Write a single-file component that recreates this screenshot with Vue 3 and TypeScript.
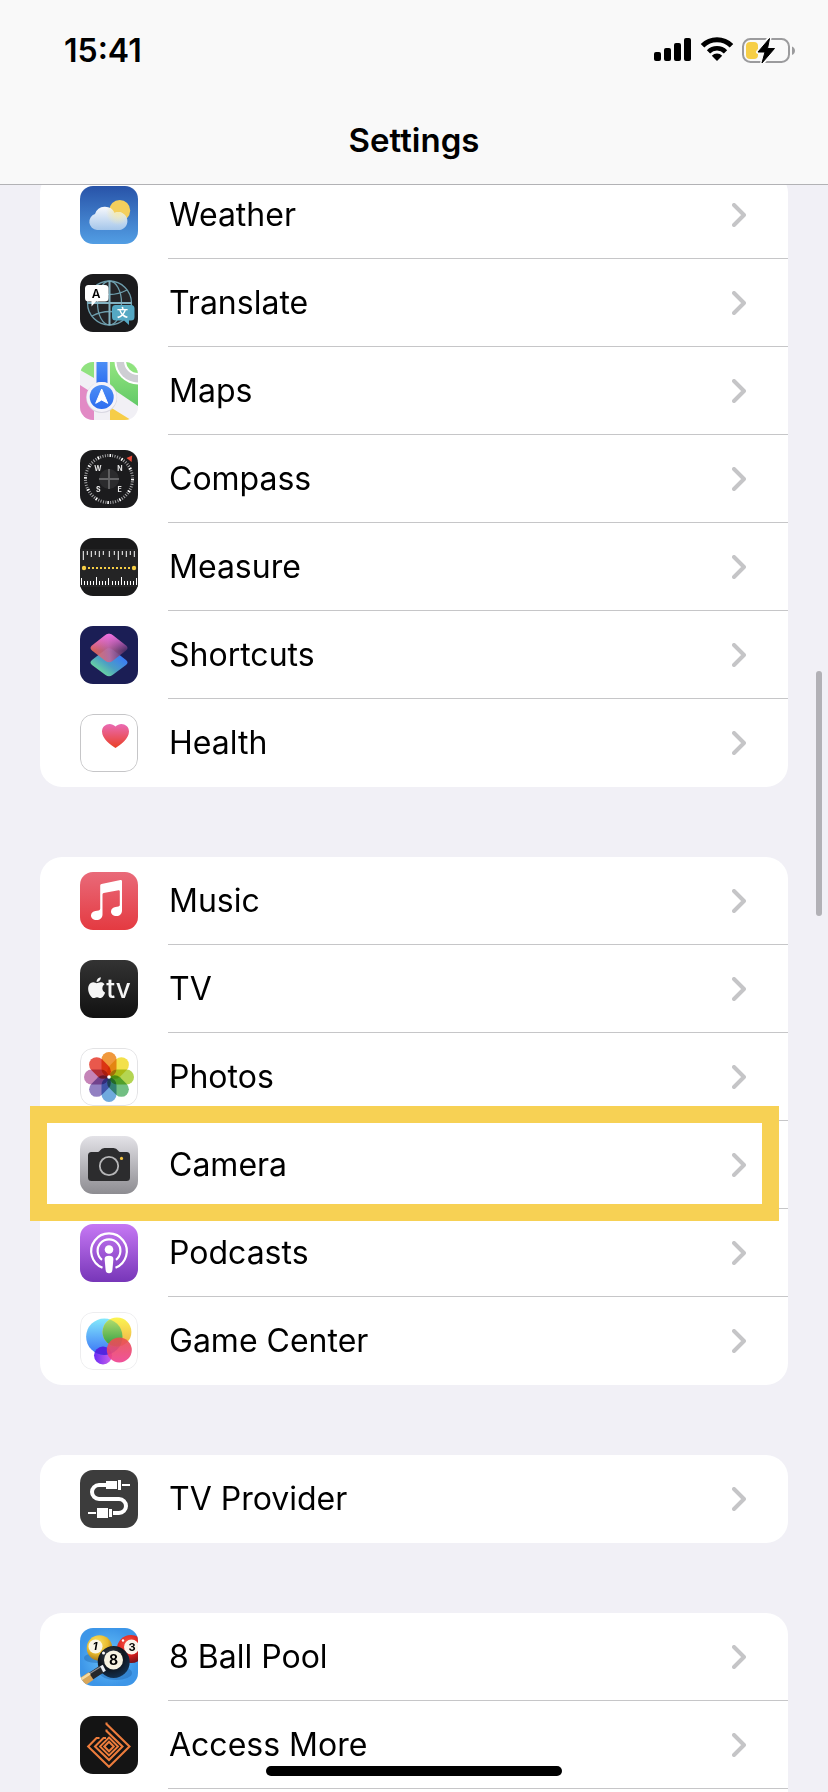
<script setup lang="ts">
interface Item {
  id: string
  label: string
  highlighted?: boolean
}

const groups: Item[][] = [
  [
    { id: 'weather', label: 'Weather' },
    { id: 'translate', label: 'Translate' },
    { id: 'maps', label: 'Maps' },
    { id: 'compass', label: 'Compass' },
    { id: 'measure', label: 'Measure' },
    { id: 'shortcuts', label: 'Shortcuts' },
    { id: 'health', label: 'Health' },
  ],
  [
    { id: 'music', label: 'Music' },
    { id: 'tv', label: 'TV' },
    { id: 'photos', label: 'Photos' },
    { id: 'camera', label: 'Camera', highlighted: true },
    { id: 'podcasts', label: 'Podcasts' },
    { id: 'game-center', label: 'Game Center' },
  ],
  [{ id: 'tv-provider', label: 'TV Provider' }],
  [
    { id: 'eight-ball-pool', label: '8 Ball Pool' },
    { id: 'access-more', label: 'Access More' },
    { id: 'more', label: '' },
  ],
]

// Ruler ticks as [x, far end] pairs; the near end is the ruler's edge.
const topTicks = [
  [3.3, 22], [7.3, 17], [11.3, 19], [15.3, 17], [19.3, 19], [23.3, 17], [29.3, 19],
  [34.3, 17], [38.3, 22], [42.3, 17], [46.3, 19], [50.3, 17], [54.3, 19],
]
const bottomTicks = [
  [1.5, 40], [4.5, 43], [7.5, 43], [10.5, 43], [13.5, 43], [16.5, 39], [19.5, 43], [22.5, 43],
  [25.5, 43], [28.5, 40], [32.5, 43], [35.5, 43], [38.5, 43], [41.5, 39], [44.5, 43],
  [47.5, 43], [50.5, 43], [53.5, 43], [56.5, 40],
]
const petals = ['#f0983c', '#f3e04a', '#b4d552', '#72bf83', '#70aade', '#9280c2', '#c584b8', '#e9584c']
</script>

<template>
  <div class="screen">
    <header class="top">
      <div class="status">
        <time class="clock">15:41</time>
        <div class="indicators">
          <svg class="signal" viewBox="0 0 38 26" aria-label="Signal">
            <rect x="0" y="15" width="7" height="9" rx="2" />
            <rect x="10" y="11" width="7" height="13" rx="2" />
            <rect x="20" y="6" width="7" height="18" rx="2" />
            <rect x="30" y="1" width="7" height="23" rx="2" />
          </svg>
          <svg class="wifi" viewBox="0 0 34 26" aria-label="Wi-Fi">
            <path d="M2.5 8.8A20.5 20.5 0 0 1 31.500 8.8" fill="none" stroke="#000" stroke-width="5" />
            <path d="M8.500 14.800A12 12 0 0 1 25.500 14.800" fill="none" stroke="#000" stroke-width="4.600" />
            <path d="M17 24l-5.200-5.300a7.400 7.400 0 0 1 10.400 0z" />
          </svg>
          <svg class="battery" viewBox="0 0 54 27" aria-label="Battery charging">
            <rect x="1" y="2" width="46" height="23" rx="7.500" fill="none" stroke="#9b9b9d" stroke-width="2" />
            <path d="M50 9.500c4 1.500 4 7 0 8.500z" fill="#9b9b9d" />
            <rect x="4" y="5" width="12" height="17" rx="4" fill="#f6ce46" />
            <path d="M27.500 1L16 15h7l-3 11.500L32.500 11.500h-7z" fill="#000" stroke="#f9f9f9" stroke-width="4" stroke-linejoin="round" />
            <path d="M27.500 1.500L16 15h7l-3 11L32.500 11.500h-7z" fill="#000" stroke="#000" stroke-linejoin="round" />
          </svg>
        </div>
      </div>
      <h1 class="title">Settings</h1>
    </header>

    <main class="list">
      <ul v-for="(group, g) in groups" :key="g" class="card">
        <li v-for="item in group" :key="item.id" class="item">
          <a class="row" :href="'#' + item.id">
            <svg class="icon" viewBox="0 0 58 58" aria-hidden="true">
              <g v-if="item.id === 'weather'">
                <defs>
                  <linearGradient id="w-sky" x2="0" y2="1"><stop stop-color="#2853a8" /><stop offset="1" stop-color="#529ee4" /></linearGradient>
                  <linearGradient id="w-cloud" x2="0" y2="1"><stop stop-color="#f6f8fc" /><stop offset="1" stop-color="#a5c6ea" /></linearGradient>
                  <radialGradient id="w-glow" gradientUnits="userSpaceOnUse" cx="38" cy="27" r="12"><stop stop-color="#f4eab0" /><stop offset="1" stop-color="#f4eab0" stop-opacity="0" /></radialGradient>
                </defs>
                <rect width="58" height="58" fill="url(#w-sky)" />
                <circle cx="39.700" cy="24.500" r="10.500" fill="#f4cf5c" />
                <path d="M17 44a8.200 8.200 0 0 1-2-16A10.500 10.500 0 0 1 34.500 27A9 9 0 1 1 37 44z" fill="url(#w-cloud)" />
                <path d="M17 44a8.200 8.200 0 0 1-2-16A10.500 10.500 0 0 1 34.500 27A9 9 0 1 1 37 44z" fill="url(#w-glow)" />
              </g>

              <g v-else-if="item.id === 'translate'">
                <rect width="58" height="58" fill="#1b1b1d" />
                <g fill="none" stroke="#6d9dac" stroke-width="1.300">
                  <circle cx="29.500" cy="29" r="22" fill="#242427" />
                  <ellipse cx="29.500" cy="29" rx="12" ry="22" />
                  <path d="M12 16Q29.500 25 47 16M12 42Q29.500 33 47 42" />
                  <path d="M29.500 7V51M7.500 29H51.500" stroke="#83b2c2" stroke-width="2" />
                </g>
                <path d="M8.500 11h16.500a3.500 3.500 0 0 1 3.500 3.500v9.500a3.500 3.500 0 0 1-3.500 3.500H16l-4.500 5v-5h-3a3.500 3.500 0 0 1-3.500-3.500v-9.500a3.500 3.500 0 0 1 3.500-3.500z" fill="#fff" />
                <path d="M35.500 31h15.500a3.500 3.500 0 0 1 3.500 3.500v8.500a3.500 3.500 0 0 1-3.500 3.500H49v4.500l-5-4.500h-8.500a3.500 3.500 0 0 1-3.500-3.500v-8.500a3.500 3.500 0 0 1 3.500-3.500z" fill="#55a8c3" />
                <text class="glyph" x="16" y="23.500" font-size="12" font-weight="600">A</text>
                <text class="glyph" x="42.500" y="43" font-size="11" font-weight="700" fill="#fff">文</text>
              </g>

              <g v-else-if="item.id === 'maps'">
                <defs>
                  <linearGradient id="m-green" x2="0" y2="1"><stop stop-color="#93e57f" /><stop offset="1" stop-color="#62c967" /></linearGradient>
                  <linearGradient id="m-blue" x2="0" y2="1"><stop stop-color="#4d8ef5" /><stop offset="1" stop-color="#2c6df0" /></linearGradient>
                </defs>
                <rect width="58" height="58" fill="#f1f0f5" />
                <path d="M0 0H14V16L0 8z" fill="#90e27f" />
                <path d="M30 0H58V44L30 25z" fill="url(#m-green)" />
                <circle cx="58" cy="-1" r="23.500" fill="#fff" />
                <circle cx="58" cy="-1" r="21.500" fill="#ceced3" />
                <circle cx="58" cy="-1" r="14" fill="#fff" />
                <circle cx="58" cy="-1" r="12" fill="#8ee37d" />
                <path d="M0 23L14 32V58H0z" fill="#e28ac5" />
                <path d="M30 45L51 58H30z" fill="#f6cd47" />
                <rect x="16.500" width="11" height="24" fill="url(#m-blue)" />
                <circle cx="21.700" cy="35.500" r="15.500" fill="#d9d8e2" />
                <circle cx="21.700" cy="35" r="15" fill="#f4f3f9" />
                <circle cx="21.700" cy="35" r="12" fill="url(#m-blue)" />
                <path d="M21.700 27l6 14.300-6-3.300-6 3.300z" fill="#fff" stroke="#fff" stroke-linejoin="round" />
              </g>

              <g v-else-if="item.id === 'compass'">
                <rect width="58" height="58" fill="#1b1b1d" />
                <circle cx="29" cy="29" r="23.500" fill="none" stroke="#a5a5a7" stroke-width="3" stroke-dasharray="1 1.461" />
                <circle cx="29" cy="29" r="23.500" fill="none" stroke="#fff" stroke-width="3" stroke-dasharray="1.400 10.904" />
                <circle cx="29" cy="29" r="10" fill="#2b2b2d" />
                <path d="M29 19V39M19 29H39" stroke="#656567" stroke-width="1.800" />
                <path d="M46.500 8l5.700-2.400-.6 6.300z" fill="#ea4b39" />
                <g class="glyph" font-size="7" font-weight="700" fill="#e6e6e6">
                  <text x="18" y="21.300">W</text><text x="40" y="21.300">N</text>
                  <text x="18.300" y="42">S</text><text x="39.700" y="42">E</text>
                </g>
              </g>

              <g v-else-if="item.id === 'measure'">
                <rect width="58" height="58" fill="#1a1a1b" />
                <rect y="11" width="58" height="38" fill="#242425" />
                <path v-for="t in topTicks" :key="'t' + t[0]" :d="`M${t[0]} 13V${t[1]}`" stroke="#fff" />
                <path v-for="t in bottomTicks" :key="'b' + t[0]" :d="`M${t[0]} 47V${t[1]}`" stroke="#fff" />
                <path d="M8 30H50" stroke="#f6ce46" stroke-width="2" stroke-dasharray="2 2" />
                <circle cx="4" cy="30" r="2.200" fill="#f6ce46" /><circle cx="54" cy="30" r="2.200" fill="#f6ce46" />
              </g>

              <g v-else-if="item.id === 'shortcuts'">
                <defs>
                  <linearGradient id="s-low" x1=".2" y1=".9" x2=".8" y2=".3"><stop stop-color="#6fe09a" /><stop offset=".5" stop-color="#4c9fc4" /><stop offset="1" stop-color="#3b7ef2" /></linearGradient>
                  <linearGradient id="s-high" x1=".05" y1=".6" x2=".95" y2=".55"><stop stop-color="#ef6a55" /><stop offset=".5" stop-color="#c0689a" /><stop offset="1" stop-color="#503067" /></linearGradient>
                  <linearGradient id="s-pink" x2="0" y2="1"><stop stop-color="#ef6fe2" /><stop offset=".6" stop-color="#ef6fe2" stop-opacity="0" /></linearGradient>
                </defs>
                <rect width="58" height="58" fill="#1b1e55" />
                <path d="M25.500 23.500q3.500-2.500 7 0L46 34q3 2.500 0 5L32.500 49q-3.500 2.500-7 0L12 39q-3-2.500 0-5z" fill="url(#s-low)" />
                <path d="M25.500 9q3.500-2.500 7 0L46 19.500q3 2.500 0 5L32.500 35q-3.500 2.500-7 0L12 24.500q-3-2.500 0-5z" fill="url(#s-high)" opacity=".88" />
                <path d="M25.500 9q3.500-2.500 7 0L46 19.500q3 2.500 0 5L32.500 35q-3.500 2.500-7 0L12 24.500q-3-2.500 0-5z" fill="url(#s-pink)" />
              </g>

              <g v-else-if="item.id === 'health'">
                <defs><linearGradient id="h-heart" x2="0" y2="1"><stop stop-color="#ea6bb5" /><stop offset="1" stop-color="#ea4025" /></linearGradient></defs>
                <rect width="58" height="58" fill="#fff" />
                <rect x=".5" y=".5" width="57" height="57" rx="12.500" fill="none" stroke="#c6c6c8" />
                <path d="M35.500 34C31 31 22 25 22 17.500C22 10 31 7.500 35.500 12.500C40 7.500 49 10 49 17.500C49 25 40 31 35.500 34z" fill="url(#h-heart)" />
              </g>

              <g v-else-if="item.id === 'music'">
                <defs><linearGradient id="mu" x2="0" y2="1"><stop stop-color="#e96a79" /><stop offset="1" stop-color="#e43a41" /></linearGradient></defs>
                <rect width="58" height="58" fill="url(#mu)" />
                <path d="M20.200 13.500q0-1.300 1.300-1.600L40.500 8q1.500-.2 1.500 1.200V38.500c0 3.500-2.300 5.500-5.500 5.500c-3.500 0-5.500-2-5.500-4.500c0-2.800 2-4.200 4.500-4.600l3-.5c1-.3 1.300-.6 1.300-1.600V19.300q0-1.300-1.300-1.100L23.700 21q-1.200.3-1.200 1.500V42.500c0 3.500-2.500 5.600-6 5.600c-3.300 0-5.500-2-5.500-4.600c0-2.600 1.800-4 4.500-4.500l3-.6c1.200-.3 1.700-.8 1.700-2z" fill="#fff" />
              </g>

              <g v-else-if="item.id === 'tv'">
                <defs><linearGradient id="tv" x2="0" y2="1"><stop stop-color="#333" /><stop offset="1" stop-color="#111" /></linearGradient></defs>
                <rect width="58" height="58" fill="url(#tv)" />
                <path transform="translate(6.200 17.200) scale(.87)" fill="#f5f5f5" d="M12.152 6.896c-.948 0-2.415-1.078-3.960-1.040-2.040.027-3.910 1.183-4.961 3.014-2.117 3.675-.546 9.103 1.519 12.090 1.013 1.454 2.208 3.090 3.792 3.039 1.520-.065 2.090-.987 3.935-.987 1.831 0 2.350.987 3.960.948 1.637-.026 2.676-1.480 3.676-2.948 1.156-1.688 1.636-3.325 1.662-3.415-.039-.013-3.182-1.221-3.220-4.857-.026-3.040 2.480-4.494 2.597-4.559-1.429-2.090-3.623-2.324-4.390-2.376-2-.156-3.675 1.090-4.610 1.090zM15.530 3.830c.843-1.012 1.400-2.427 1.245-3.830-1.207.052-2.662.805-3.532 1.818-.780.896-1.454 2.338-1.273 3.714 1.338.104 2.715-.688 3.559-1.701" />
                <text class="glyph" x="38.500" y="37.700" font-size="26" font-weight="500" fill="#f5f5f5">tv</text>
              </g>

              <g v-else-if="item.id === 'photos'">
                <rect width="58" height="58" fill="#fff" />
                <rect x=".5" y=".5" width="57" height="57" rx="12.500" fill="none" stroke="#e3e3e5" />
                <rect v-for="(c, i) in petals" :key="c" class="petal" x="21.500" y="4" width="15" height="24.500" rx="7.500" :fill="c" :transform="`rotate(${i * 45} 29 29)`" />
                <circle cx="29" cy="29" r="1.800" fill="#fff" />
              </g>

              <g v-else-if="item.id === 'camera'">
                <defs><linearGradient id="ca" x2="0" y2="1"><stop stop-color="#e3e2e7" /><stop offset="1" stop-color="#8d8c91" /></linearGradient></defs>
                <rect width="58" height="58" fill="url(#ca)" />
                <path d="M11.500 16h6q1.500 0 2.500-1.500Q21.500 12 24.500 12h9q3 0 4.500 2.500Q39 16 40.500 16h6q3.500 0 3.500 3.500v22q0 3.500-3.500 3.500h-35Q8 45 8 41.500v-22Q8 16 11.500 16z" fill="#2c2c2e" />
                <circle cx="29" cy="30" r="9.200" fill="none" stroke="#b5b5b7" stroke-width="1.800" />
                <circle cx="41.500" cy="22.400" r="1.600" fill="#f6c643" />
              </g>

              <g v-else-if="item.id === 'podcasts'">
                <defs><linearGradient id="po" x2="0" y2="1"><stop stop-color="#c678f4" /><stop offset="1" stop-color="#7736b8" /></linearGradient></defs>
                <rect width="58" height="58" fill="url(#po)" />
                <g fill="none" stroke="#fff" stroke-width="2.200">
                  <path d="M22.500 43.800A17.800 17.800 0 1 1 35.500 43.800" />
                  <path d="M22 35.800A11.400 11.400 0 1 1 36 35.800" />
                </g>
                <circle cx="29" cy="25.500" r="4.300" fill="#fff" />
                <path d="M24.600 35q0-3.300 4.400-3.300t4.400 3.300l-1 11q-.4 3.200-3.400 3.200t-3.400-3.200z" fill="#fff" />
              </g>

              <g v-else-if="item.id === 'game-center'">
                <defs>
                  <linearGradient id="g-b" x2="0" y2="1"><stop stop-color="#7de8fb" /><stop offset="1" stop-color="#2f6bf5" /></linearGradient>
                  <linearGradient id="g-y" x2="0" y2="1"><stop stop-color="#fbf551" /><stop offset="1" stop-color="#efae4b" /></linearGradient>
                  <linearGradient id="g-p"><stop stop-color="#6a2cf5" /><stop offset="1" stop-color="#cf62ea" /></linearGradient>
                  <linearGradient id="g-r" x2="0" y2="1"><stop stop-color="#e8504a" /><stop offset="1" stop-color="#ee3e90" /></linearGradient>
                  <linearGradient id="g-g" x2="0" y2="1"><stop stop-color="#b9df70" /><stop offset="1" stop-color="#2f9f45" /></linearGradient>
                  <clipPath id="g-c"><circle cx="24.300" cy="24.700" r="18.200" /></clipPath>
                </defs>
                <rect width="58" height="58" fill="#fff" />
                <rect x=".5" y=".5" width="57" height="57" rx="12.500" fill="none" stroke="#ededef" />
                <circle cx="23" cy="43.500" r="9" fill="url(#g-p)" />
                <circle cx="24.300" cy="24.700" r="18.200" fill="url(#g-b)" opacity=".95" />
                <circle cx="37" cy="20" r="14.400" fill="url(#g-y)" />
                <circle cx="37" cy="20" r="14.400" fill="url(#g-g)" clip-path="url(#g-c)" />
                <circle cx="23" cy="43.500" r="9" fill="#5325e0" clip-path="url(#g-c)" />
                <circle cx="39.300" cy="38" r="12.500" fill="url(#g-r)" opacity=".9" />
              </g>

              <g v-else-if="item.id === 'tv-provider'">
                <rect width="58" height="58" fill="#3c3c3c" />
                <path d="M26 15H19a7 7 0 0 0 0 14H39a7 7 0 0 1 0 14H33" fill="none" stroke="#fff" stroke-width="4" />
                <path d="M26 11h11v8H26zM38 10h3v10H38zM42 14h8v2H42zM8 42h8v2H8zM17 38h11v10H17zM29 39h3v8H29z" fill="#fff" />
              </g>

              <g v-else-if="item.id === 'eight-ball-pool'">
                <defs>
                  <radialGradient id="e-bg"><stop stop-color="#6ac4fa" /><stop offset="1" stop-color="#3d96e8" /></radialGradient>
                  <radialGradient id="e-y" cx=".4" cy=".3" r=".7"><stop stop-color="#fbe56a" /><stop offset=".6" stop-color="#e9bb2e" /><stop offset="1" stop-color="#a8791a" /></radialGradient>
                  <radialGradient id="e-r" cx=".4" cy=".3" r=".7"><stop stop-color="#fa5545" /><stop offset=".6" stop-color="#d9201d" /><stop offset="1" stop-color="#7b1118" /></radialGradient>
                  <radialGradient id="e-k" cx=".4" cy=".3" r=".8"><stop stop-color="#3b434b" /><stop offset=".5" stop-color="#0f151d" /><stop offset="1" stop-color="#13375c" /></radialGradient>
                </defs>
                <rect width="58" height="58" fill="url(#e-bg)" />
                <ellipse cx="36" cy="45" rx="16" ry="7" fill="#1c5fa8" opacity=".4" />
                <ellipse cx="16" cy="30" rx="12" ry="5" fill="#1c5fa8" opacity=".4" />
                <circle cx="19.500" cy="20" r="12.800" fill="url(#e-y)" />
                <circle cx="51" cy="21" r="14" fill="url(#e-r)" />
                <circle cx="15.500" cy="18.500" r="7" fill="#fbf7e6" />
                <circle cx="51.500" cy="19" r="7.500" fill="#fbf4ea" />
                <circle cx="33.700" cy="34" r="16" fill="url(#e-k)" />
                <circle cx="33.500" cy="32" r="9.500" fill="#f7f3e2" />
                <circle cx="23.500" cy="25" r="1.500" fill="#fff" />
                <circle cx="43" cy="12.500" r="1.200" fill="#fff" />
                <g class="glyph" font-weight="700">
                  <text x="15" y="22.300" font-size="11" font-style="italic">1</text>
                  <text x="52" y="22.800" font-size="11">3</text>
                  <text x="33.500" y="37" font-size="14">8</text>
                </g>
                <path d="M22 41L8 50" stroke="#26282b" stroke-width="8" />
                <path d="M21 38.500L9 46" stroke="#8b8f94" stroke-width="1.400" />
                <path d="M21.500 37.500l3 6" stroke="#e9eef3" stroke-width="3" />
                <path d="M11 48L0 55.500" stroke="#d9a659" stroke-width="9" />
                <path d="M10 45.500L0 52" stroke="#f5dba2" stroke-width="2.500" />
              </g>

              <g v-else-if="item.id === 'access-more'">
                <rect width="58" height="58" fill="#141414" />
                <g fill="none" stroke="#ec7c3c" stroke-width="2.100">
                  <path d="M26.500 6.500V8L49.500 30.500L29 50.800L8.200 30.500L16.500 22H19.500" />
                  <path d="M26.500 13.500V15L42.500 30.500L29 44L15 30.500L23.500 22H26" />
                  <path d="M29 21.500L38 30.500L29 39.500L20 30.500z" stroke-width="1.900" />
                  <path d="M29 25.800L33.700 30.500L29 35.200L24.300 30.500z" />
                </g>
              </g>
            </svg>
            <span class="label">{{ item.label }}</span>
            <svg class="chevron" viewBox="0 0 14 24" aria-hidden="true">
              <path d="M2 2l10 10L2 22" />
            </svg>
          </a>
          <div v-if="item.highlighted" class="highlight"></div>
        </li>
      </ul>
    </main>

    <div class="scrollbar"></div>
    <div class="home-indicator"></div>
  </div>
</template>

<style>
body {
  margin: 0;
}
</style>

<style scoped>
.screen {
  position: relative;
  display: flex;
  flex-direction: column;
  height: 100vh;
  overflow: hidden;
  background: #f1f0f6;
  color: #000;
  font-family: Inter, "Noto Sans CJK SC", sans-serif;
}

.top {
  position: relative;
  z-index: 2;
  flex: none;
  background: #f9f9f9;
  border-bottom: 1px solid #b2b2b5;
}

.status {
  display: flex;
  align-items: center;
  justify-content: space-between;
  height: 100px;
  padding: 0 32px 0 64px;
}

.clock {
  font-size: 32px;
  font-weight: 600;
}

.indicators {
  display: flex;
  align-items: center;
  gap: 8px;
}

.signal {
  width: 38px;
  height: 26px;
}

.wifi {
  width: 34px;
  height: 26px;
}

.battery {
  width: 54px;
  height: 27px;
}

.title {
  margin: 0;
  height: 84px;
  font-size: 33px;
  font-weight: 600;
  line-height: 80px;
  text-align: center;
}

.list {
  flex: none;
  display: flex;
  flex-direction: column;
  gap: 70px;
  margin-top: -14px;
  padding: 0 40px;
}

.card {
  margin: 0;
  padding: 0;
  list-style: none;
  background: #fff;
  border-radius: 22px;
}

.item {
  position: relative;
}

.row {
  display: grid;
  grid-template-columns: 58px 1fr 14px;
  column-gap: 31px;
  align-items: center;
  height: 88px;
  padding: 0 42px 0 40px;
  color: inherit;
  text-decoration: none;
}

.item:not(:last-child)::after {
  content: "";
  position: absolute;
  right: 0;
  bottom: 0;
  left: 128px;
  height: 1px;
  background: #c6c6c8;
}

.icon {
  width: 58px;
  height: 58px;
  border-radius: 13px;
  overflow: hidden;
}

.glyph {
  font-family: Inter, "Noto Sans CJK SC", sans-serif;
  text-anchor: middle;
}

.petal {
  mix-blend-mode: multiply;
}

.label {
  font-size: 32px;
  line-height: 40px;
}

.chevron {
  width: 14px;
  height: 24px;
  fill: none;
  stroke: #c5c5c7;
  stroke-width: 4;
  stroke-linecap: round;
  stroke-linejoin: round;
}

.highlight {
  position: absolute;
  z-index: 1;
  inset: -15px 9px -12px -10px;
  border: 17px solid #f7d154;
  pointer-events: none;
}

.scrollbar {
  position: absolute;
  top: 671px;
  right: 6px;
  width: 6px;
  height: 245px;
  border-radius: 3px;
  background: #b2b1b6;
}

.home-indicator {
  position: absolute;
  bottom: 16px;
  left: 50%;
  width: 296px;
  height: 10px;
  margin-left: -148px;
  border-radius: 5px;
  background: #000;
}
</style>
